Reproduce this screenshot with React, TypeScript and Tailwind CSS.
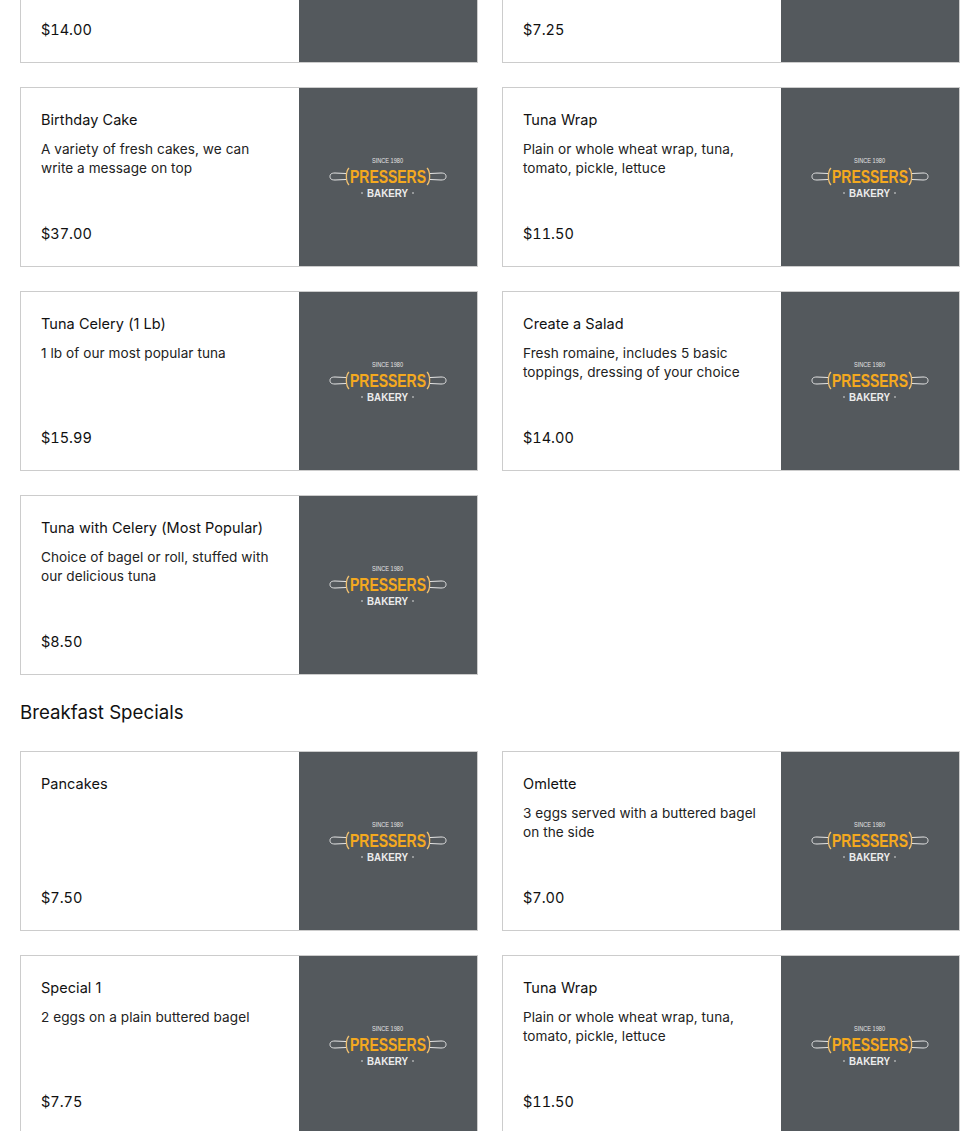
// Menu section - two column list of item cards with the bakery logo as image
import React from 'react';

type MenuItem = {
  name: string;
  description?: string;
  price: string;
};

const lunchItems: MenuItem[] = [
  { name: 'Create a Salad', description: 'Fresh romaine', price: '$14.00' },
  { name: 'Egg Salad', description: 'Plain or whole wheat wrap', price: '$7.25' },
  { name: 'Birthday Cake', description: 'A variety of fresh cakes, we can write a message on top', price: '$37.00' },
  { name: 'Tuna Wrap', description: 'Plain or whole wheat wrap, tuna, tomato, pickle, lettuce', price: '$11.50' },
  { name: 'Tuna Celery (1 Lb)', description: '1 lb of our most popular tuna', price: '$15.99' },
  { name: 'Create a Salad', description: 'Fresh romaine, includes 5 basic toppings, dressing of your choice', price: '$14.00' },
  { name: 'Tuna with Celery (Most Popular)', description: 'Choice of bagel or roll, stuffed with our delicious tuna', price: '$8.50' },
];

const breakfastItems: MenuItem[] = [
  { name: 'Pancakes', price: '$7.50' },
  { name: 'Omlette', description: '3 eggs served with a buttered bagel on the side', price: '$7.00' },
  { name: 'Special 1', description: '2 eggs on a plain buttered bagel', price: '$7.75' },
  { name: 'Tuna Wrap', description: 'Plain or whole wheat wrap, tuna, tomato, pickle, lettuce', price: '$11.50' },
];

const BakeryLogo = () => (
  <svg width="118" height="42" viewBox="0 0 118 42" fill="none">
    <text x="58.5" y="7" textAnchor="middle" fontFamily="Liberation Sans, sans-serif" fontSize="7" fill="#e4e4e4" textLength="31" lengthAdjust="spacingAndGlyphs">
      SINCE 1980
    </text>
    {/* rolling pin handles */}
    <path d="M17 17.5L6 17C2 17 1 18.5 1 20.5C1 22.5 2 24 6 24L17 23.5" stroke="#e6e6e6" strokeWidth="1" />
    <path d="M101 17.5L112 17C116 17 117 18.5 117 20.5C117 22.5 116 24 112 24L101 23.5" stroke="#e6e6e6" strokeWidth="1" />
    <path d="M20 12C16.5 15.5 16.5 25.5 20 29" stroke="#f0c070" strokeWidth="1.3" />
    <path d="M98 12C101.5 15.5 101.5 25.5 98 29" stroke="#f0c070" strokeWidth="1.3" />
    <text x="59" y="27" textAnchor="middle" fontFamily="Liberation Sans, sans-serif" fontWeight="700" fontSize="18" fill="#f4a91f" textLength="76" lengthAdjust="spacingAndGlyphs">
      PRESSERS
    </text>
    <circle cx="33" cy="37" r="0.8" fill="#e8e8e8" />
    <text x="58.5" y="40.5" textAnchor="middle" fontFamily="Liberation Sans, sans-serif" fontWeight="700" fontSize="10" fill="#ececec" textLength="41" lengthAdjust="spacingAndGlyphs">
      BAKERY
    </text>
    <circle cx="84" cy="37" r="0.8" fill="#e8e8e8" />
  </svg>
);

const MenuCard = ({ item }: { item: MenuItem }) => (
  <div className="flex h-[180px] border border-[#cccccc] bg-white">
    <div className="flex w-[278px] flex-col px-5 pt-[22px] text-[#111111]">
      <h3 className="text-[14.5px] leading-[20px] tracking-[0.05px]">{item.name}</h3>
      <p className="mt-[10px] h-[38px] text-[13.6px] leading-[19px] tracking-[0.05px] text-[#222222]">{item.description}</p>
      <span className="mt-[46px] text-[14.5px] leading-[20px] tabular-nums">{item.price}</span>
    </div>
    <div className="flex w-[178px] items-center justify-center bg-[#54595d]">
      <BakeryLogo />
    </div>
  </div>
);

export default function App() {
  return (
    <div className="h-[1131px] overflow-hidden bg-white font-['Inter',sans-serif]">
      <div className="-mt-[117px] pl-5 pr-[5px]">
        <div className="grid grid-cols-2 gap-6">
          {lunchItems.map((item, index) => (
            <MenuCard key={index} item={item} />
          ))}
        </div>

        <h2 className="mt-[24px] mb-[24px] text-[18.7px] leading-[28px] text-[#111111]">Breakfast Specials</h2>

        <div className="grid grid-cols-2 gap-6">
          {breakfastItems.map((item, index) => (
            <MenuCard key={index} item={item} />
          ))}
        </div>
      </div>
    </div>
  );
}
